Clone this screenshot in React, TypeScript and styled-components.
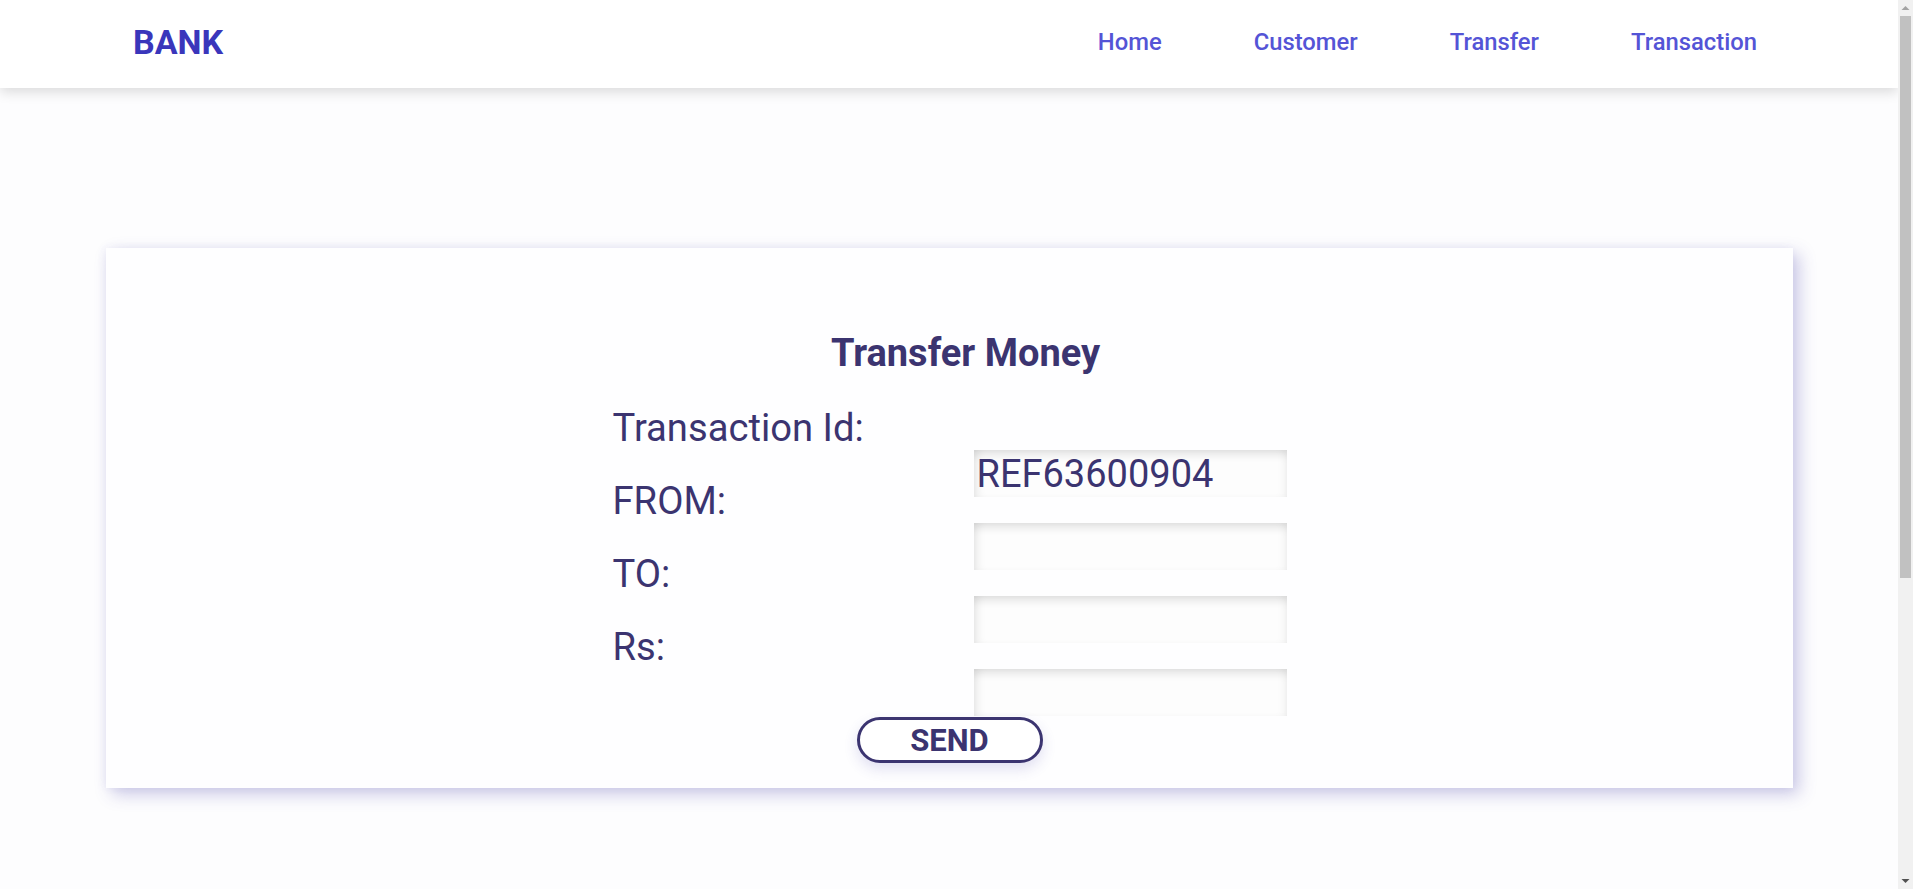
import React from 'react';
import styled, { createGlobalStyle } from 'styled-components';

const GlobalStyle = createGlobalStyle`
    * {
        box-sizing: border-box;
    }
    body {
        margin: 0;
        background: #fdfdfe;
        font-family: Roboto, "Liberation Sans", sans-serif;
    }
`;

const links = ['Home', 'Customer', 'Transfer', 'Transaction'];

const fields = [
    { label: 'Transaction Id:', value: 'REF63600904' },
    { label: 'FROM:', value: '' },
    { label: 'TO:', value: '' },
    { label: 'Rs:', value: '' },
];

export default function App() {
    return (
        <>
            <GlobalStyle />
            <Page>
                <NavBar>
                    <Brand>BANK</Brand>
                    <NavLinks>
                        {links.map((link) => (
                            <NavLink key={link} href="#">
                                {link}
                            </NavLink>
                        ))}
                    </NavLinks>
                </NavBar>
                <Main>
                    <Card>
                        <Title>Transfer Money</Title>
                        <Form onSubmit={(e) => e.preventDefault()}>
                            <LabelColumn>
                                {fields.map((f) => (
                                    <Label key={f.label}>{f.label}</Label>
                                ))}
                            </LabelColumn>
                            <InputColumn>
                                {fields.map((f) => (
                                    <Input key={f.label} defaultValue={f.value} readOnly={!!f.value} />
                                ))}
                            </InputColumn>
                        </Form>
                        <SendButton type="button">SEND</SendButton>
                    </Card>
                </Main>
            </Page>
            {/* the window's scrollbar, as it shows in the screenshot */}
            <ScrollTrack>
                <ScrollArrow viewBox="0 0 15 16">
                    <path d="M3.5 10 L7.5 6 L11.5 10 Z" fill="#a3a3a3" />
                </ScrollArrow>
                <ScrollThumb />
                <ScrollArrow viewBox="0 0 15 16" $bottom>
                    <path d="M3.5 6 L7.5 10 L11.5 6 Z" fill="#505050" />
                </ScrollArrow>
            </ScrollTrack>
        </>
    );
}

const Page = styled.div`
    width: calc(100% - 15px);
    min-height: 1370px;
    display: flex;
    flex-direction: column;
`;

const NavBar = styled.header`
    height: 88px;
    display: flex;
    align-items: center;
    justify-content: space-between;
    padding: 0 141px 0 133px;
    background: #ffffff;
    box-shadow: 0 4px 12px rgba(0, 0, 0, 0.14);
`;

const Brand = styled.div`
    font-size: 34px;
    font-weight: 700;
    color: #3a36bb;
    margin-top: -4px;
`;

const NavLinks = styled.nav`
    display: flex;
    gap: 92px;
    margin-top: -4px;
`;

const NavLink = styled.a`
    font-size: 23.8px;
    font-weight: 500;
    color: #5454d6;
    text-decoration: none;
`;

const Main = styled.main`
    padding: 160px 105px 0 106px;
`;

const Card = styled.section`
    height: 540px;
    background: #fefeff;
    display: flex;
    flex-direction: column;
    align-items: center;
    padding-top: 84px;
    box-shadow: 6px 6px 16px rgba(70, 60, 170, 0.28), -2px 0 8px rgba(70, 60, 170, 0.06);
`;

const Title = styled.h2`
    margin: 0 0 31px;
    padding-left: 32px;
    font-size: 38px;
    line-height: 43px;
    font-weight: 700;
    color: #3b3470;
`;

const Form = styled.form`
    display: flex;
    width: 674px;
`;

const LabelColumn = styled.div`
    width: 361px;
    display: flex;
    flex-direction: column;
    gap: 29px;
`;

const Label = styled.label`
    font-size: 38.2px;
    line-height: 44px;
    color: #3b3470;
`;

const InputColumn = styled.div`
    width: 313px;
    display: flex;
    flex-direction: column;
    gap: 26px;
    padding-top: 44px;
`;

const Input = styled.input`
    width: 313px;
    height: 47px;
    border: none;
    outline: none;
    padding: 0 0 0 3px;
    font-family: Roboto, "Liberation Sans", sans-serif;
    font-size: 38px;
    color: #3b3470;
    background: #fdfdfd;
    box-shadow: inset 0 9px 10px -5px rgba(0, 0, 0, 0.12), inset 8px 0 10px -5px rgba(0, 0, 0, 0.09),
        inset -7px 0 10px -5px rgba(0, 0, 0, 0.06);
`;

const SendButton = styled.button`
    width: 186px;
    height: 46px;
    margin-top: 1px;
    border: 3px solid #3b3470;
    border-radius: 24px;
    background: #ffffff;
    color: #3b3470;
    font-family: Roboto, "Liberation Sans", sans-serif;
    font-size: 31px;
    font-weight: 700;
    line-height: 1;
    cursor: pointer;
    box-shadow: 0 6px 14px rgba(70, 60, 170, 0.16);
`;

const ScrollTrack = styled.div`
    position: fixed;
    top: 0;
    right: 0;
    width: 15px;
    height: 100vh;
    background: #f1f1f1;
    display: flex;
    flex-direction: column;
`;

const ScrollArrow = styled.svg<{ $bottom?: boolean }>`
    width: 15px;
    height: 16px;
    flex: none;
    margin-top: ${({ $bottom }) => ($bottom ? 'auto' : '0')};
`;

const ScrollThumb = styled.div`
    height: 562px;
    margin: 0 2px;
    background: #c1c1c1;
`;
